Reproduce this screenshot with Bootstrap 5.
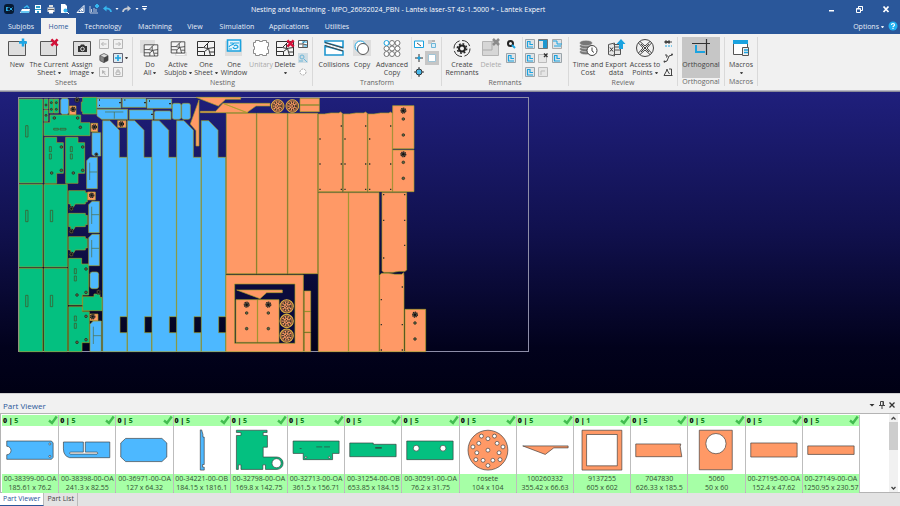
<!DOCTYPE html>
<html lang="en">
<head>
<meta charset="utf-8">
<meta name="viewport" content="width=device-width, initial-scale=1">
<title>Nesting and Machining - Lantek Expert</title>
<link href="https://cdn.jsdelivr.net/npm/bootstrap@5.3.0/dist/css/bootstrap.min.css" rel="stylesheet">
<style>
  :root { --brand: #2a579a; --ink: #444; --cyan: #1ba3e0; --ok: #a6ffa6; }
  body { font-family: "Open Sans", "Noto Sans", sans-serif; font-size: 7px; line-height: 9px; color: var(--ink); background: #f1f1f1; }
  button { font: inherit; color: inherit; background: none; border: 0; padding: 0; }
  svg { display: block; }
  .topbar { background: var(--brand); color: #fff; }
  .titlebar { height: 18px; }
  .quick { flex: 5 1 0; gap: 3px; padding-left: 4px; }
  .quick svg { width: 10px; height: 10px; }
  .quick button:first-child { margin-right: 3px; }
  .quick .arrow { width: 4px; }
  .winbtns { flex: 7 1 0; gap: 17px; padding-right: 9px; }
  .winbtns svg { width: 10px; height: 10px; }
  .tabs { height: 16px; padding-left: 1px; }
  .tabs a { color: #e8eef8; text-decoration: none; line-height: 17px; text-align: center; }
  .tabs a.on { background: #f1f1f1; color: var(--brand); }
  .t35 { width: 35px; } .t40 { width: 40px; } .t46 { width: 46px; } .t50 { width: 50px; } .t54 { width: 54px; } .t30 { width: 30px; }
  .ribbon { background: #f1f1f1; height: 57px; border-bottom: 1px solid #b9b9c4; }
  .group { border-right: 1px solid #d9d9d9; margin: 3px 0 4px; }
  .group-name { color: #666; text-align: center; line-height: 8px; }
  .tool { padding-top: 1px; display: flex; flex-direction: column; align-items: center; line-height: 8px; text-align: center; white-space: nowrap; height: 41px; }
  .tool svg { width: 20px; height: 20px; margin-bottom: 3px; flex: none; }
  .tool:disabled { color: #aaa; }
  .tool.pressed { background: #c6c6c6; }
  .w22 { width: 22px; } .w26 { width: 26px; } .w28 { width: 28px; } .w30 { width: 30px; } .w32 { width: 32px; } .w34 { width: 34px; } .w36 { width: 36px; } .w38 { width: 38px; }
  .pad3 { padding-left: 3px; } .pad2 { padding-left: 2px; } .pad4 { padding-left: 4px; } .end2 { padding-right: 2px; }
  .small-tools { width: 14px; display: flex; flex-direction: column; align-items: center; }
  .small-tools button { height: 14px; width: 14px; display: flex; align-items: center; justify-content: center; }
  .small-tools svg { width: 10px; height: 10px; }
  .small-tools .held { background: #c6c6c6; }
  .divide { border-left: 1px solid #dedede; }
  .caret { display: inline-block; border: 1px solid transparent; border-top: 2px solid currentColor; border-bottom: 0; width: 3px; vertical-align: middle; margin-left: 2px; }
  .tool > .caret { margin-top: 3px; }
  .stage { background: linear-gradient(#1f1f7c, #11114f 45%, #02021c 85%, #000014); border-top: 1px solid #8a8a9a; min-height: 0; }
  .stage svg { width: 100%; height: 100%; }
  .o { fill: #ff9966; } .b { fill: #4db8ff; } .g { fill: #04c080; }
  .cut path, .cut rect { stroke: #a0a028; stroke-width: 2; }
  .cut .hole path { fill: none; stroke: #4a4a20; stroke-width: 2; }
  .cut .hole circle { fill: #5b6a3c; stroke: #222; stroke-width: 2; }
  .cut .dots { stroke: #30302a; stroke-width: 4; fill: none; }
  .cut .void { fill: #0b0b3c; }
  .cut .line { fill: none; stroke: #4f6a40; }
  .panel-head { border-top: 1px solid #d0d0d0; height: 20px; padding: 3px 4px 0 3px; }
  .panel-head h2 { font-size: 8px; line-height: 18px; color: var(--brand); font-weight: 400; margin: 0; }
  .panel-head svg { width: 8px; height: 8px; }
  .panel-tools { gap: 2px; }
  .parts { background: #fff; border: 1px solid #b4b4b4; border-width: 1px 0 1px 1px; padding-left: 1px; height: 80px; }
  .part-list { margin-right: 29px; padding: 1px 0 0; }
  .part { flex: 1 1 0; border-right: 1px solid #bdbdbd; min-width: 0; white-space: nowrap; text-align: center; }
  .part-top { background: var(--ok); height: 11px; line-height: 11px; padding-left: 1px; text-align: left; font-weight: 700; color: #0a7a1a; }
  .part-top b { color: #111; }
  .part-top svg { width: 10px; height: 10px; }
  .part > svg { width: 100%; height: 48px; stroke: #3a3a3a; stroke-width: 2; }
  .part-name { background: var(--ok); color: #345034; line-height: 9px; padding-bottom: 1px; }
  .scroll { width: 9px; background: #f1f1f1; margin-right: 2px; }
  .scroll svg { width: 9px; height: 8px; }
  .thumb { background: #cdcdcd; height: 28px; }
  .bottom { background: #e3e3e3; height: 13px; }
  .bottom a { color: var(--ink); text-decoration: none; line-height: 12px; padding: 0 3px; border-right: 1px solid #bbb; }
  .bottom a.on { background: #fff; color: var(--brand); border-bottom: 1px solid var(--brand); }
</style>
<script src="https://cdn.jsdelivr.net/npm/bootstrap@5.3.0/dist/js/bootstrap.bundle.min.js"></script>
</head>
<body class="d-flex flex-column vh-100 overflow-hidden">

<svg width="0" height="0" class="position-absolute" aria-hidden="true">
  <symbol id="nest" viewBox="0 0 20 20"><path fill="#f4f4f4" stroke="#333" d="M1.500 3.500h17v14h-17z"/><path fill="none" stroke="#333" d="M1.500 9.500h6l6-6M7.500 9.500l4 1 7-1M11.500 5.500v5M1.500 13.500h7v4M8.500 13.500l4-3 2 7M14 14h4.500"/></symbol>
  <symbol id="redx" viewBox="0 0 10 10"><path stroke="#d3123a" stroke-width="2.800" d="M1.500 1.500l7 7M8.500 1.500l-7 7"/></symbol>
  <symbol id="tick" viewBox="0 0 10 10"><path fill="none" stroke="#43bd50" stroke-width="2.400" d="M1 5.500l3 2.500 4.700-6.500"/></symbol>
  <symbol id="minisheet" viewBox="0 0 10 10"><path fill="#dfe3e6" stroke="#9aa4aa" d="M.5.500h9v9h-9z"/><path fill="none" stroke="#1ba3e0" stroke-width="1.200" d="M2 2.500h3v3h3M2 8h6M2.500 3v5"/></symbol>
  <symbol id="rosette" viewBox="-22 -22 44 44"><circle class="o" r="19" stroke="#d8b040" stroke-width="3"/><circle r="16" fill="none" stroke="#2c2620" stroke-width="2"/><circle r="11" fill="none" stroke="#40382a" stroke-width="6" stroke-dasharray="4 3"/><circle r="4" fill="none" stroke="#40382a" stroke-width="4" stroke-dasharray="3 2"/></symbol>
  <symbol id="bolt" viewBox="-9 -9 18 18"><circle r="6" fill="#5a5040" stroke="#222" stroke-width="3" stroke-dasharray="3 1.500"/><circle r="3" fill="#111"/></symbol>
</svg>

<header class="topbar">
  <div class="titlebar d-flex align-items-center">
    <div class="quick d-flex align-items-center">
      <button aria-label="Application menu"><svg viewBox="0 0 10 10"><rect width="10" height="10" rx="3" fill="#071a33"/><path fill="none" stroke="#29a8e0" d="M2 3.500h2.500M2 5h2M2 6.500h2.500M2.500 3v4M5.500 3.500l3 3M8.500 3.500l-3 3"/></svg></button>
      <button aria-label="Open"><svg viewBox="0 0 10 10"><path fill="#fff" d="M0 9l2-4h8L9 9z"/><path fill="none" stroke="#35b5ee" stroke-width="1.500" d="M4 4l3-2 2 2M1 8h8"/></svg></button>
      <button aria-label="Save"><svg viewBox="0 0 10 10"><path fill="#fff" d="M2 1h6v8H2z"/><path fill="#2a9cc9" d="M3 2h4v2H3zM2 5h6v1H2zM4 7h2v2H4z"/></svg></button>
      <button aria-label="Print"><svg viewBox="0 0 10 10"><path fill="#ddd" d="M3 1h4v2H3zM1.500 3.500h7V8h-7z"/><path fill="#666" d="M2 5h6v1H2z"/><path fill="#fff" d="M3 6h4v3.500H3z"/></svg></button>
      <button aria-label="Preview"><svg viewBox="0 0 10 10"><path fill="#fff" d="M2 0h4l2 2v7H2z"/><circle cx="6.500" cy="6.500" r="2" fill="#35b5ee"/><path stroke="#fff" d="M8 8l2 2"/></svg></button>
      <button aria-label="Geometry" class="ms-1"><svg viewBox="0 0 10 10"><path fill="none" stroke="#fff" d="M1 8.500h7V1.500zM4 7h2.500V4.500z"/></svg></button>
      <button aria-label="Statistics"><svg viewBox="0 0 10 10"><path fill="none" stroke="#b9c6dc" d="M1 2v7h8M2.500 8V5M5 8V4M7 8V5"/><path stroke="#35b5ee" stroke-width="2" d="M6 2h4M8 0v4"/></svg></button>
      <button aria-label="Undo"><svg viewBox="0 0 10 10"><path fill="none" stroke="#35b5ee" stroke-width="1.800" d="M9 8c0-3-3-4-6-3.500"/><path fill="#35b5ee" d="M1 4.500L4.500 1.500v6z"/></svg></button>
      <button aria-label="Undo list"><svg class="arrow" viewBox="0 0 4 10"><path fill="#fff" d="M.5 4h3L2 6z"/></svg></button>
      <button aria-label="Redo"><svg viewBox="0 0 10 10"><path fill="none" stroke="#c9ccd2" stroke-width="1.800" d="M1 8c0-3 3-4 6-3.500"/><path fill="#c9ccd2" d="M9 4.500L5.500 1.500v6z"/></svg></button>
      <button aria-label="Redo list"><svg class="arrow" viewBox="0 0 4 10"><path fill="#fff" d="M.5 4h3L2 6z"/></svg></button>
      <button aria-label="Customize"><svg viewBox="0 0 10 10"><path fill="#fff" d="M0 2h5v1H0zM0 4h5L2.500 6.500z"/></svg></button>
    </div>
    <div>Nesting and Machining - MPO_26092024_PBN - Lantek laser-ST 42-1.5000 * - Lantek Expert</div>
    <div class="winbtns d-flex justify-content-end align-items-center">
      <button aria-label="Minimize"><svg viewBox="0 0 10 10"><path fill="#fff" d="M2 6h5v1.500H2z"/></svg></button>
      <button aria-label="Restore"><svg viewBox="0 0 10 10"><path fill="none" stroke="#fff" d="M2.500 4.500h4v4h-4zM4.500 4V2.500h4v4H7M2.500 5h4M4.500 2.500h4"/></svg></button>
      <button aria-label="Close"><svg viewBox="0 0 10 10"><path stroke="#fff" stroke-width="1.800" d="M2.500 2.500l5 5.500M7.500 2.500L2.500 8"/></svg></button>
    </div>
  </div>
  <nav class="tabs d-flex align-items-center" aria-label="Ribbon">
    <a href="#" class="t40">Subjobs</a><a href="#" class="t35 on">Home</a><a href="#" class="t54">Technology</a><a href="#" class="t50">Machining</a><a href="#" class="t30">View</a><a href="#" class="t54">Simulation</a><a href="#" class="t50">Applications</a><a href="#" class="t46">Utilities</a>
    <a href="#" class="ms-auto me-1">Options<i class="caret"></i></a>
    <button aria-label="Help" class="end2"><svg width="10" height="10" viewBox="0 0 10 10"><circle cx="5" cy="5" r="4.500" fill="#1fb0f0"/><path fill="none" stroke="#fff" stroke-width="1.200" d="M3.500 4c0-2 3-2 3 0 0 1-1.500 1-1.500 2.200M5 7v1"/></svg></button>
  </nav>
</header>

<main class="d-flex flex-column flex-grow-1 overflow-hidden">
<div class="ribbon d-flex" role="toolbar" aria-label="Home tools">
  <section class="group">
    <div class="d-flex pad3">
      <button class="tool w28"><svg viewBox="0 0 20 20"><path fill="#dedede" stroke="#555" d="M1.500 3.500h17v14h-17z"/><path stroke="#1ba8e8" stroke-width="2.500" d="M12 4.500h8M16 .500v8"/></svg>New</button>
      <button class="tool w36"><svg viewBox="0 0 20 20"><path fill="#dedede" stroke="#555" d="M1.500 3.500h16v14h-16z"/><use href="#redx" x="11" y="0" width="9" height="9"/></svg>The Current<span>Sheet<i class="caret"></i></span></button>
      <button class="tool w30"><svg viewBox="0 0 20 20"><path fill="#dedede" stroke="#555" d="M1.500 3.500h17v14h-17z"/><path fill="#333" d="M6 8h2l1-1.500h3L13 8h2v6H6z"/><circle cx="10.500" cy="11" r="1.800" fill="#333" stroke="#ddd"/></svg>Assign<span>image<i class="caret"></i></span></button>
      <div class="small-tools">
        <button aria-label="Previous" disabled><svg viewBox="0 0 10 10"><path fill="none" stroke="#b5b5b5" d="M.5.500h9v9h-9zM2.500 5h5M4.500 3l-2 2 2 2"/></svg></button>
        <button aria-label="3D view"><svg viewBox="0 0 10 10"><path fill="#ddd" stroke="#555" stroke-width=".800" d="M5 .500l4 2v5l-4 2-4-2v-5z"/><path fill="#888" stroke="#555" stroke-width=".600" d="M1 2.500l4 2v5l-4-2z"/><path fill="#444" d="M9 2.500l-4 2v5l4-2z"/></svg></button>
        <button aria-label="Select" disabled><svg viewBox="0 0 10 10"><path fill="none" stroke="#b5b5b5" d="M.5.500h9v9h-9z"/><path fill="#b5b5b5" d="M3 3l4 2-2 .500 2 2-1 .500-1.500-2L3 7z"/></svg></button>
      </div>
      <div class="small-tools">
        <button aria-label="Next" disabled><svg viewBox="0 0 10 10"><path fill="none" stroke="#b5b5b5" d="M.5.500h9v9h-9zM2.500 5h5M5.500 3l2 2-2 2"/></svg></button>
        <button aria-label="Add sheet"><svg viewBox="0 0 10 10"><path fill="#d9e9f2" stroke="#667" d="M.5.500h9v9h-9z"/><path stroke="#1ba3e0" stroke-width="1.600" d="M2 5h6M5 2v6"/></svg></button>
        <button aria-label="Lock" disabled><svg viewBox="0 0 10 10"><path fill="none" stroke="#b5b5b5" d="M.5.500h9v9h-9zM3 5h4v2.500H3zM4 5V3h2v2"/></svg></button>
      </div>
      <button class="d-flex align-items-center pe-1" aria-label="Add sheet options"><i class="caret ms-0"></i></button>
    </div>
    <div class="group-name">Sheets</div>
  </section>
  <section class="group">
    <div class="d-flex pad3">
      <button class="tool w28"><svg viewBox="0 0 20 20"><path fill="#dedede" d="M0 2h15v13H0z"/><use href="#nest" x="3" y="4" width="16" height="16"/></svg>Do<span>All<i class="caret"></i></span></button>
      <button class="tool w28"><svg viewBox="0 0 20 20"><path fill="#dedede" d="M7 14h12v4H7z"/><path fill="#fff" stroke="#ccc" stroke-width=".500" d="M8 15.500h9v2H8z"/><use href="#nest" x="2" y="1" width="16" height="16"/></svg>Active<span>Subjob<i class="caret"></i></span></button>
      <button class="tool w28"><svg><use href="#nest"/></svg>One<span>Sheet<i class="caret"></i></span></button>
      <button class="tool w28"><svg viewBox="0 0 20 20"><path fill="#dedede" d="M1 3h17v15H1z"/><path fill="#eaf6fc" stroke="#1ba3e0" stroke-width="1.600" d="M3.500 2h13v11h-13z"/><path fill="none" stroke="#1ba3e0" stroke-width="1.200" d="M5 9c1-3 4-1 5-4l5 0M6 5h3M10 8c2-2 4 0 4 1s-4 3-5 0M5 11h3"/></svg>One<span>Window</span></button>
      <button class="tool w26" disabled><svg viewBox="0 0 20 20"><path fill="#fff" stroke="#8a8a8a" d="M4.500 2.500h4v1h3v-1h4v2h2v4h-1v3h1v4h-2v2h-4v-1h-3v1h-4v-2h-2v-4h1v-3h-1v-4h2z"/></svg>Unitary</button>
      <button class="tool w22"><svg viewBox="0 0 20 20"><use href="#nest" width="20" height="20"/><use href="#redx" x="11" y="1" width="9" height="9"/></svg>Delete<i class="caret ms-0"></i></button>
      <div class="small-tools mx-auto">
        <button aria-label="Nest preview"><svg viewBox="0 0 10 10"><path fill="#fff" stroke="#555" d="M.5 1.500h9v7h-9zM.500 5h4l2-3M5 8V5l4 1"/><path fill="none" stroke="#1ba3e0" d="M4 3h5M6 7h3"/></svg></button>
        <button aria-label="Zoom nest"><svg viewBox="0 0 10 10"><path fill="#cfdde4" d="M0 0h10v10H0z"/><circle cx="4" cy="4" r="2" fill="none" stroke="#6cb6d8"/><path stroke="#6cb6d8" d="M6 6l3 3M1 8h4"/></svg></button>
        <button aria-label="Round part" disabled><svg viewBox="0 0 10 10"><circle cx="5" cy="5" r="3" fill="#fff" stroke="#aaa" stroke-dasharray="2 1"/></svg></button>
      </div>
      <span class="end2"></span>
    </div>
    <div class="group-name">Nesting</div>
  </section>
  <section class="group">
    <div class="d-flex pad4">
      <button class="tool w34"><svg viewBox="0 0 20 20"><path fill="#fff" stroke="#1f97cf" stroke-width="1.600" d="M1 3h18v6.500L1 4.500zM1 8l18 5v4H1z"/><path stroke="#444" stroke-width="1" d="M1 4.500l18 5.500M1 7.500l18 5.500"/></svg>Collisions</button>
      <button class="tool w22"><svg viewBox="0 0 20 20"><path fill="#dedede" d="M1 2h18v16H1z"/><circle cx="8.500" cy="8.500" r="5.500" fill="#fff" stroke="#1ba3e0"/><circle cx="11" cy="11" r="5.500" fill="#fff" stroke="#555"/></svg>Copy</button>
      <button class="tool w38"><svg viewBox="0 0 20 20"><g fill="#fff" stroke="#777"><circle cx="10" cy="5" r="2.500"/><circle cx="15.500" cy="5" r="2.500"/><circle cx="4.500" cy="10.500" r="2.500"/><circle cx="10" cy="10.500" r="2.500"/><circle cx="15.500" cy="10.500" r="2.500"/><circle cx="4.500" cy="16" r="2.500"/><circle cx="10" cy="16" r="2.500"/><circle cx="15.500" cy="16" r="2.500"/></g><circle cx="4.500" cy="5" r="2.500" fill="#fff" stroke="#1ba3e0"/></svg>Advanced<span>Copy</span></button>
      <div class="small-tools divide">
        <button aria-label="Scale"><svg viewBox="0 0 10 10"><path fill="#fff" stroke="#1ba3e0" d="M.5 2h9v6.500h-9z"/><path stroke="#555" d="M3 4l4 3"/></svg></button>
        <button aria-label="Move"><svg viewBox="0 0 10 10"><path stroke="#333" d="M1 5h8M5 1v8"/><path stroke="#1ba3e0" stroke-width="2" d="M3.500 5h3M5 3.500v3"/></svg></button>
        <button aria-label="Rotate"><svg viewBox="0 0 10 10"><path stroke="#333" d="M0 5h10M5 0v10"/><circle cx="5" cy="5" r="3" fill="#49b8ea" stroke="#333"/></svg></button>
      </div>
      <div class="small-tools">
        <button aria-label="Align"><svg viewBox="0 0 10 10"><path fill="#ccc" d="M1 1h4v4H1z"/><path fill="#dceef7" stroke="#6cb6d8" d="M4.500 4.500h4v4h-4z"/><path stroke="#777" d="M5 2h3"/></svg></button>
        <button aria-label="Frame" class="held"><svg viewBox="0 0 10 10"><path fill="#fff" stroke="#9fc4d6" d="M1.500 1.500h7v7h-7z"/></svg></button>
      </div>
      <span class="end2"></span>
    </div>
    <div class="group-name">Transform</div>
  </section>
  <section class="group">
    <div class="d-flex pad4 pe-1">
      <button class="tool w32"><svg viewBox="0 0 20 20"><circle cx="10" cy="10.500" r="8" fill="none" stroke="#333" stroke-dasharray="10 2.500"/><circle cx="10" cy="10.500" r="3" fill="none" stroke="#222" stroke-width="2"/><circle cx="10" cy="10.500" r="4.700" fill="none" stroke="#222" stroke-width="1.500" stroke-dasharray="1.840 1.840"/></svg>Create<span>Remnants</span></button>
      <button class="tool w26" disabled><svg viewBox="0 0 20 20"><path fill="#d6d6d6" stroke="#b4b4b4" d="M1.500 3.500h16v14h-16z"/><path fill="none" stroke="#aaa" d="M2 12h9V4"/><path stroke="#8a8a8a" stroke-width="2.500" d="M12 1l6 6M18 1l-6 6"/></svg>Delete</button>
      <div class="small-tools me-1">
        <button aria-label="Remnant settings"><svg viewBox="0 0 10 10"><circle cx="4.500" cy="4.500" r="2.500" fill="none" stroke="#222" stroke-width="2"/><path stroke="#1ba3e0" stroke-width="2" d="M6 6l3 3"/></svg></button>
        <button aria-label="Remnant export"><svg><use href="#minisheet"/></svg></button>
      </div>
      <div class="small-tools divide">
        <button aria-label="Remnant 1"><svg><use href="#minisheet"/></svg></button><button aria-label="Remnant 2"><svg><use href="#minisheet"/></svg></button><button aria-label="Remnant 3"><svg><use href="#minisheet"/></svg></button>
      </div>
      <div class="small-tools">
        <button aria-label="Fill remnant"><svg viewBox="0 0 10 10"><path fill="#1f97cf" stroke="#777" d="M.5.500h9v9h-9z"/><path fill="#e4e4e4" d="M1 5h4V2H1zM1 5h4v4H1z"/></svg></button><button aria-label="Remove remnant"><svg viewBox="0 0 10 10"><path fill="#e6e6e6" stroke="#bbb" d="M.5 1.500h8v8h-8z"/><path stroke="#333" stroke-width="1.400" d="M6 .500l3.500 3.500M9.500.500L6 4"/></svg></button><button aria-label="Edit remnant" disabled><svg viewBox="0 0 10 10"><path fill="#e6e6e6" stroke="#bbb" d="M.5.500h9v9h-9zM3 8V4h4"/></svg></button>
      </div>
      <div class="small-tools">
        <button aria-label="Split remnant"><svg viewBox="0 0 10 10"><path fill="#dfe3e6" stroke="#aaa" d="M.5.500h9v9h-9z"/><path fill="none" stroke="#1ba3e0" d="M1 2h4v3h5M2 7h7"/></svg></button><button aria-label="Remnant link"><svg><use href="#minisheet"/></svg></button>
      </div>
    </div>
    <div class="group-name">Remnants</div>
  </section>
  <section class="group">
    <div class="d-flex pad4">
      <button class="tool w30"><svg viewBox="0 0 20 20"><g fill="#777" stroke="#eee" stroke-width=".600"><ellipse cx="8" cy="14" rx="6.500" ry="2.800"/><ellipse cx="8" cy="11" rx="6.500" ry="2.800"/><ellipse cx="8" cy="8" rx="6.500" ry="2.800"/><ellipse cx="8" cy="5" rx="6.500" ry="2.800"/></g><circle cx="14" cy="12.500" r="5" fill="#fff" stroke="#444"/><path fill="none" stroke="#444" d="M14 9.500v3.500l2 1.500"/></svg>Time and<span>Cost</span></button>
      <button class="tool w26"><svg viewBox="0 0 20 20"><path fill="#e6e6e6" stroke="#555" d="M7.500 6.500h7v10h-7M2.500 6.500l6-1.500v13l-6-1.500zM14 9h-5M14 12h-5"/><path stroke="#333" d="M4 9.500l3 4M7 9.500l-3 4"/><path fill="#1ba3e0" d="M15 1l4.500 5h-2.500v5h-4V6h-2.500z"/></svg>Export<span>data</span></button>
      <button class="tool w32"><svg viewBox="0 0 20 20"><circle cx="10" cy="10" r="8.500" fill="none" stroke="#444"/><path fill="none" stroke="#444" d="M5 3.500l5 4.500 5-4.500M5 16.500l5-4.500 5 4.500M3.500 5l4.500 5-4.500 5M16.500 5L12 10l4.500 5M6 6l8 8M14 6l-8 8"/></svg>Access to<span>Points<i class="caret"></i></span></button>
      <div class="small-tools">
        <button aria-label="Swap"><svg viewBox="0 0 10 10"><path fill="none" stroke="#444" d="M1 3h8M3 1v4M6 1v4"/><path stroke="#444" stroke-width="2" d="M2 3h5"/><path stroke="#1ba3e0" stroke-dasharray="2 1" d="M2 7h7"/></svg></button>
        <button aria-label="Path"><svg viewBox="0 0 10 10"><path fill="none" stroke="#444" d="M1 9l3-1 2-5 3-1M2 2h2v2H3"/><circle cx="9" cy="1.500" r="1" fill="#444"/><circle cx="1.500" cy="8.500" r="1" fill="#444"/></svg></button>
        <button aria-label="Angle"><svg viewBox="0 0 10 10"><path fill="none" stroke="#444" d="M1 8.500h8.500M1 8.500L4 3l2.500 4M6 2h2.500v6"/><circle cx="4" cy="3" r="1" fill="#444"/></svg></button>
      </div>
      <span class="end2"></span>
    </div>
    <div class="group-name">Review</div>
  </section>
  <section class="group">
    <div class="pad4 pe-1">
      <button class="tool w38 pressed" aria-pressed="true"><svg viewBox="0 0 20 20"><path stroke="#333" stroke-width="1.200" d="M1 5.500h18M15.500 1v16"/><path fill="none" stroke="#1ba3e0" stroke-width="2" d="M5 7v7h9"/></svg>Orthogonal</button>
    </div>
    <div class="group-name">Orthogonal</div>
  </section>
  <section class="group">
    <button class="tool w32"><svg viewBox="0 0 20 20"><path fill="#fff" stroke="#555" d="M2.500 2.500h14v14h-14z"/><path fill="#1ba3e0" d="M2 2h15v4H2z"/><path fill="#f1f1f1" stroke="#555" d="M11.500 9.500h6v8h-6z"/><path stroke="#1ba3e0" stroke-width="1.500" d="M13 12h4M13 14.500h4"/></svg>Macros<i class="caret ms-0"></i></button>
    <div class="group-name">Macros</div>
  </section>
</div>

<div class="stage flex-grow-1">
<svg viewBox="0 92 900 301" preserveAspectRatio="xMinYMin meet" role="img" aria-label="Nested sheet">
  <rect x="18.500" y="97.500" width="510" height="254" fill="none" stroke="#8d8da8"/>
  <g class="cut" transform="translate(10 90) scale(.33333)">
    <g class="g">
      <path d="M27 27h71v252H27zM27 283h71v248H27zM102 283h70v248h-70zM27 535h71v250H27zM102 535h70v250h-70z"/>
      <path d="M102 27h12v30h-12zM102 60h12v34h-12zM118 27h13v42h-13zM132 27h14v42h-14zM102 98h18V75h92v23h28v39H102z"/>
      <path d="M104 142h36v16h20v92h-20v30h-36zM167 142h37v16h20v92h-20v30h-37z"/>
      <path d="M218 22h42v50h-42v-8h-4V36h4zM176 302h50v6h6v28h-6v6h-30l-6 10h-8v-10h-6zM176 370h50v6h6v28h-6v6h-30l-6 10h-8v-10h-6zM176 440h50v6h6v28h-6v6h-30l-6 10h-8v-10h-6z"/>
      <path d="M176 505h39v17h21v93h-19v30h-41zM176 650h41v15h21v93h-22v27h-40zM218 620h34v-8h18v10h6v40h-58z"/>
    </g>
    <g class="hole">
      <path d="M47 107h7v34h-7zM47 361h7v34h-7zM121 361h7v34h-7zM47 616h7v34h-7zM121 616h7v34h-7z"/>
      <path d="M131 115h14v5h-14zM150 115h18v5h-18zM118 170h6v15h-6zM118 192h6v15h-6zM181 170h6v15h-6zM181 192h6v15h-6zM193 536h6v15h-6zM193 558h6v15h-6zM193 678h6v15h-6zM193 700h6v15h-6z"/>
      <circle cx="133" cy="84" r="4"/><circle cx="203" cy="84" r="4"/><circle cx="211" cy="112" r="4"/><circle cx="154" cy="171" r="4"/><circle cx="125" cy="249" r="4"/><circle cx="154" cy="241" r="4"/><circle cx="218" cy="171" r="4"/><circle cx="190" cy="249" r="4"/><circle cx="218" cy="241" r="4"/><circle cx="228" cy="537" r="4"/><circle cx="201" cy="615" r="4"/><circle cx="228" cy="607" r="4"/><circle cx="228" cy="679" r="4"/><circle cx="201" cy="757" r="4"/><circle cx="228" cy="749" r="4"/><circle cx="108" cy="45" r="3"/><circle cx="108" cy="76" r="3"/><circle cx="124" cy="38" r="3"/><circle cx="139" cy="38" r="3"/><circle cx="124" cy="58" r="3"/><circle cx="139" cy="58" r="3"/>
    </g>
    <g class="b">
      <path d="M156 25h16l4 5v38l-4 5h-16l-4-5V30zM246 128h26v70h-18l-8-4zM240 202h22v94h-32v-84zM246 334h22v94h-32v-84zM246 433h22v94h-32v-84zM250 693h24v92h-34v-82z"/>
      <rect x="240" y="546" width="26" height="50" rx="7"/>
    </g>
    <path class="line" d="M239 218v52M239 246h23M245 350v52M245 374h23M245 450v52M245 475h23M250 710v52M250 737h24"/>
    <path class="o" d="M178 48h20v26h-20zM243 100h20v25h-20zM233 306h23v24h-23zM240 672h24v20h-24z"/>
    <use href="#bolt" x="179" y="48" width="20" height="20"/><use href="#bolt" x="191" y="20" width="20" height="20"/><use href="#bolt" x="243" y="101" width="20" height="20"/><use href="#bolt" x="235" y="306" width="20" height="20"/><use href="#bolt" x="174" y="346" width="20" height="20"/><use href="#bolt" x="174" y="414" width="20" height="20"/><use href="#bolt" x="174" y="483" width="20" height="20"/><use href="#bolt" x="238" y="670" width="20" height="20"/><use href="#bolt" x="256" y="596" width="20" height="20"/><use href="#bolt" x="252" y="186" width="14" height="14"/>
  </g>
  <g class="cut" transform="translate(95 90) scale(.33333)">
    <g class="b">
      <path d="M6 25h72v29H6zM82 25h71v27H82zM156 27h74v28h-74zM6 58h92v30H20L6 78zM103 60h71v28h-71zM178 66l4-3h42l4 3v22h-50z"/>
      <rect x="232" y="40" width="26" height="48" rx="6"/><rect x="260" y="40" width="26" height="48" rx="6"/>
      <path d="M23 785V92h22l28 29v81h23v478H75v48h21v57zM97 785V92h22l28 29v81h23v478h-21v48h21v57zM171 785V92h22l28 29v81h23v478h-21v48h21v57zM245 785V92h22l28 29v81h23v478h-21v48h21v57zM319 785V92h22l28 29v81h23v478h-21v48h21v57z"/>
    </g>
    <path class="line" d="M30 66h55M58 66v20"/>
    <path class="dots" d="M72 38h6M147 38h6M222 41h6M168 73h6M12 30h3M88 30h3M162 33h3M12 46h3"/>
    <g class="o">
      <path d="M68 92h25v20H68z"/>
      <path d="M303 22h134v6h-45l-22 20zM316 64h46l22-24 74 28H316zM384 40h141v8h-42l-28 20zM312 30v138h-9v-46l-17-20z"/>
      <path d="M615 25h58v19h-58zM615 46h58v19h-58z"/>
      <path d="M394 70h90v481h-90zM486 70h91v481h-91zM579 70h89v481h-89z"/>
    </g>
    <use href="#bolt" x="69" y="92" width="20" height="20"/><use href="#rosette" x="526" y="26" width="44" height="44"/><use href="#rosette" x="570" y="26" width="44" height="44"/>
  </g>
  <g class="cut" transform="translate(310 90) scale(.33333)">
    <g class="o">
      <path d="M25 305V72h18l20-3h24l4-3 6 4v235zM100 305V72h18l20-3h24l4-3 6 4v235zM174 305V72h18l20-3h25l4-3 6 4v235z"/>
      <path d="M248 47h64v129h-64zM248 180h64v125h-64zM25 308h90v477H25zM116 308h91v477h-91z"/>
      <path d="M216 308h74v232l-5 4h-18l-18 3h-28l-5-5z"/>
    </g>
    <path class="dots" d="M28 147h4M28 222h4M28 298h4M92 108h4M92 222h4M92 298h4M103 147h4M103 222h4M103 298h4M165 108h4M165 222h4M165 298h4M177 147h4M177 222h4M177 298h4M240 108h4M240 222h4M240 298h4M219 314h4M282 314h4M219 391h4M282 391h4M282 466h4M219 504h4"/>
    <g class="hole"><circle cx="280" cy="87" r="4"/><circle cx="280" cy="135" r="4"/><circle cx="280" cy="217" r="4"/><circle cx="280" cy="265" r="4"/></g>
    <use href="#bolt" x="269" y="51" width="22" height="22"/><use href="#bolt" x="269" y="182" width="22" height="22"/>
  </g>
  <g class="cut" transform="translate(220 265) scale(.33333)">
    <path class="o" d="M18 30h232v230H18z"/>
    <path class="void" d="M44 57h181v178H44z"/>
    <g class="o">
      <path d="M50 75h137v8h-47l-20 18zM48 104h64v128H48zM113 104h64v128h-64zM253 78h19v61h-19zM253 140h19v61h-19zM253 203h19v57h-19z"/>
      <path d="M479 30l6-5h20l20 3h20l6-5 1 10v227h-73zM555 133h62v127h-62z"/>
    </g>
    <path class="dots" d="M482 104h4M482 179h4M482 255h4M545 66h4M545 179h4M545 255h4"/>
    <g class="hole"><circle cx="80" cy="144" r="4"/><circle cx="80" cy="191" r="4"/><circle cx="145" cy="144" r="4"/><circle cx="145" cy="191" r="4"/><circle cx="585" cy="174" r="4"/><circle cx="585" cy="222" r="4"/></g>
    <use href="#bolt" x="69" y="108" width="22" height="22"/><use href="#bolt" x="134" y="108" width="22" height="22"/><use href="#bolt" x="574" y="138" width="22" height="22"/>
    <use href="#rosette" x="177" y="101" width="46" height="46"/><use href="#rosette" x="177" y="145" width="46" height="46"/><use href="#rosette" x="177" y="189" width="46" height="46"/>
  </g>
</svg>
</div>

<section>
  <div class="panel-head d-flex justify-content-between">
    <h2>Part Viewer</h2>
    <div class="d-flex align-items-center panel-tools">
      <button aria-label="Panel menu"><svg viewBox="0 0 8 8"><path fill="#333" d="M1.500 3h5L4 5.500z"/></svg></button>
      <button aria-label="Pin panel"><svg viewBox="0 0 8 8"><path fill="none" stroke="#444" d="M2.500 4.500v-4h3v4M1 4.500h6M4 4.500V8M5 1v3"/></svg></button>
      <button aria-label="Close panel"><svg viewBox="0 0 8 8"><path stroke="#333" stroke-width="1.300" d="M1.500 1.500l5 5M6.500 1.500l-5 5"/></svg></button>
    </div>
  </div>
  <div class="parts d-flex">
    <div class="part-list d-flex flex-grow-1">
      <article class="part"><div class="part-top d-flex justify-content-between"><span><b>0 |</b> 5</span><svg><use href="#tick"/></svg></div><svg viewBox="0 0 171 147"><path class="b" d="M14 46h137l5 6v44l-5 6H14V88a13 13 0 1 0 0-26z"/><circle cx="146" cy="55" r="3" fill="#fff"/><circle cx="146" cy="93" r="3" fill="#fff"/></svg><div class="part-name">00-38399-00-OA<br>185.61 x 76.2</div></article>
      <article class="part"><div class="part-top d-flex justify-content-between"><span><b>0 |</b> 5</span><svg><use href="#tick"/></svg></div><svg viewBox="0 0 171 147"><path class="b" d="M13 49h61v31H34q-5 3 0 6h82q5-3 0-6H80V49h75v48H32Q13 92 13 70z"/></svg><div class="part-name">00-38398-00-OA<br>241.3 x 82.55</div></article>
      <article class="part"><div class="part-top d-flex justify-content-between"><span><b>0 |</b> 5</span><svg><use href="#tick"/></svg></div><svg viewBox="0 0 171 147"><path class="b" d="M29 38h111l15 14v43l-15 14H29L14 95V52z"/></svg><div class="part-name">00-36971-00-OA<br>127 x 64.32</div></article>
      <article class="part"><div class="part-top d-flex justify-content-between"><span><b>0 |</b> 5</span><svg><use href="#tick"/></svg></div><svg viewBox="0 0 171 147"><path class="b" d="M80 12h4l4 14v8h4v84h-5v8h5v9H80z"/></svg><div class="part-name">00-34221-00-OB<br>184.15 x 1816.1</div></article>
      <article class="part"><div class="part-top d-flex justify-content-between"><span><b>0 |</b> 5</span><svg><use href="#tick"/></svg></div><svg viewBox="0 0 171 147"><path class="g" d="M16 13h94v7H98v9h13v36H98v30h42a19 19 0 0 1 0 38h-35v-14h-8v14H30v-14h-8v14h-6V29h14v-9H16z"/><circle cx="139" cy="114" r="14" fill="#fff"/></svg><div class="part-name">00-32798-00-OA<br>169.8 x 142.75</div></article>
      <article class="part"><div class="part-top d-flex justify-content-between"><span><b>0 |</b> 5</span><svg><use href="#tick"/></svg></div><svg viewBox="0 0 171 147"><path class="g" d="M15 46h141v38h-20v19H46V84H15z"/><path fill="none" d="M86 64h18M110 64h18M35 69h6"/><circle cx="54" cy="96" r="3" fill="#fff"/><circle cx="126" cy="96" r="3" fill="#fff"/></svg><div class="part-name">00-32713-00-OA<br>361.5 x 156.71</div></article>
      <article class="part"><div class="part-top d-flex justify-content-between"><span><b>0 |</b> 5</span><svg><use href="#tick"/></svg></div><svg viewBox="0 0 171 147"><path class="g" d="M14 52h72v4h70v38H14z"/><path d="M92 67h20" stroke-width="4"/></svg><div class="part-name">00-31254-00-OB<br>653.85 x 184.15</div></article>
      <article class="part"><div class="part-top d-flex justify-content-between"><span><b>0 |</b> 5</span><svg><use href="#tick"/></svg></div><svg viewBox="0 0 171 147"><path class="g" d="M14 46h142v57H14z"/><circle cx="43" cy="68" r="9" fill="#fff"/><circle cx="125" cy="68" r="9" fill="#fff"/></svg><div class="part-name">00-30591-00-OA<br>76.2 x 31.75</div></article>
      <article class="part"><div class="part-top d-flex justify-content-between"><span><b>0 |</b> 5</span><svg><use href="#tick"/></svg></div><svg viewBox="0 0 171 147"><circle class="o" cx="85" cy="74" r="61"/><g fill="#fff"><circle cx="85" cy="74" r="6"/><circle cx="85" cy="39" r="6"/><circle cx="65" cy="31" r="6"/><circle cx="105" cy="31" r="6"/><circle cx="57" cy="53" r="6"/><circle cx="113" cy="53" r="6"/><circle cx="39" cy="64" r="6"/><circle cx="131" cy="64" r="6"/><circle cx="51" cy="82" r="6"/><circle cx="119" cy="82" r="6"/><circle cx="48" cy="103" r="6"/><circle cx="122" cy="103" r="6"/><circle cx="70" cy="105" r="6"/><circle cx="100" cy="105" r="6"/><circle cx="85" cy="121" r="6"/></g></svg><div class="part-name">rosete<br>104 x 104</div></article>
      <article class="part"><div class="part-top d-flex justify-content-between"><span><b>0 |</b> 5</span><svg><use href="#tick"/></svg></div><svg viewBox="0 0 171 147"><path class="o" d="M17 61h139v6h-44L86 87z"/></svg><div class="part-name">100260332<br>355.42 x 66.63</div></article>
      <article class="part"><div class="part-top d-flex justify-content-between"><span><b>0 |</b> 1</span><svg><use href="#tick"/></svg></div><svg viewBox="0 0 171 147"><path class="o" fill-rule="evenodd" d="M24 13h122v122H24zM38 26v96h94V26z"/></svg><div class="part-name">9137255<br>605 x 602</div></article>
      <article class="part"><div class="part-top d-flex justify-content-between"><span><b>0 |</b> 5</span><svg><use href="#tick"/></svg></div><svg viewBox="0 0 171 147"><path class="o" d="M14 55h138l-2 8 5 31H14z"/></svg><div class="part-name">7047830<br>626.33 x 185.5</div></article>
      <article class="part"><div class="part-top d-flex justify-content-between"><span><b>0 |</b> 5</span><svg><use href="#tick"/></svg></div><svg viewBox="0 0 171 147"><path class="o" d="M34 13h101v121H34z"/><circle cx="85" cy="54" r="31" fill="#fff"/></svg><div class="part-name">5060<br>50 x 60</div></article>
      <article class="part"><div class="part-top d-flex justify-content-between"><span><b>0 |</b> 5</span><svg><use href="#tick"/></svg></div><svg viewBox="0 0 171 147"><path class="o" d="M14 52h142v43H14z"/></svg><div class="part-name">00-27195-00-OA<br>152.4 x 47.62</div></article>
      <article class="part"><div class="part-top d-flex justify-content-between"><span><b>0 |</b> 5</span><svg><use href="#tick"/></svg></div><svg viewBox="0 0 171 147"><path class="o" d="M14 61h142v26H14z"/></svg><div class="part-name">00-27149-00-OA<br>1250.95 x 230.57</div></article>
    </div>
    <div class="scroll d-flex flex-column">
      <button aria-label="Scroll up"><svg viewBox="0 0 9 8"><path fill="none" stroke="#444" stroke-width="1.300" d="M2.500 5.500l2-2 2 2"/></svg></button>
      <div class="thumb"></div>
      <button aria-label="Scroll down" class="mt-auto"><svg viewBox="0 0 9 8"><path fill="none" stroke="#444" stroke-width="1.300" d="M2.500 3l2 2 2-2"/></svg></button>
    </div>
  </div>
  <nav class="bottom d-flex" aria-label="Panels"><a href="#" class="on">Part Viewer</a><a href="#">Part List</a></nav>
</section>
</main>
</body>
</html>
